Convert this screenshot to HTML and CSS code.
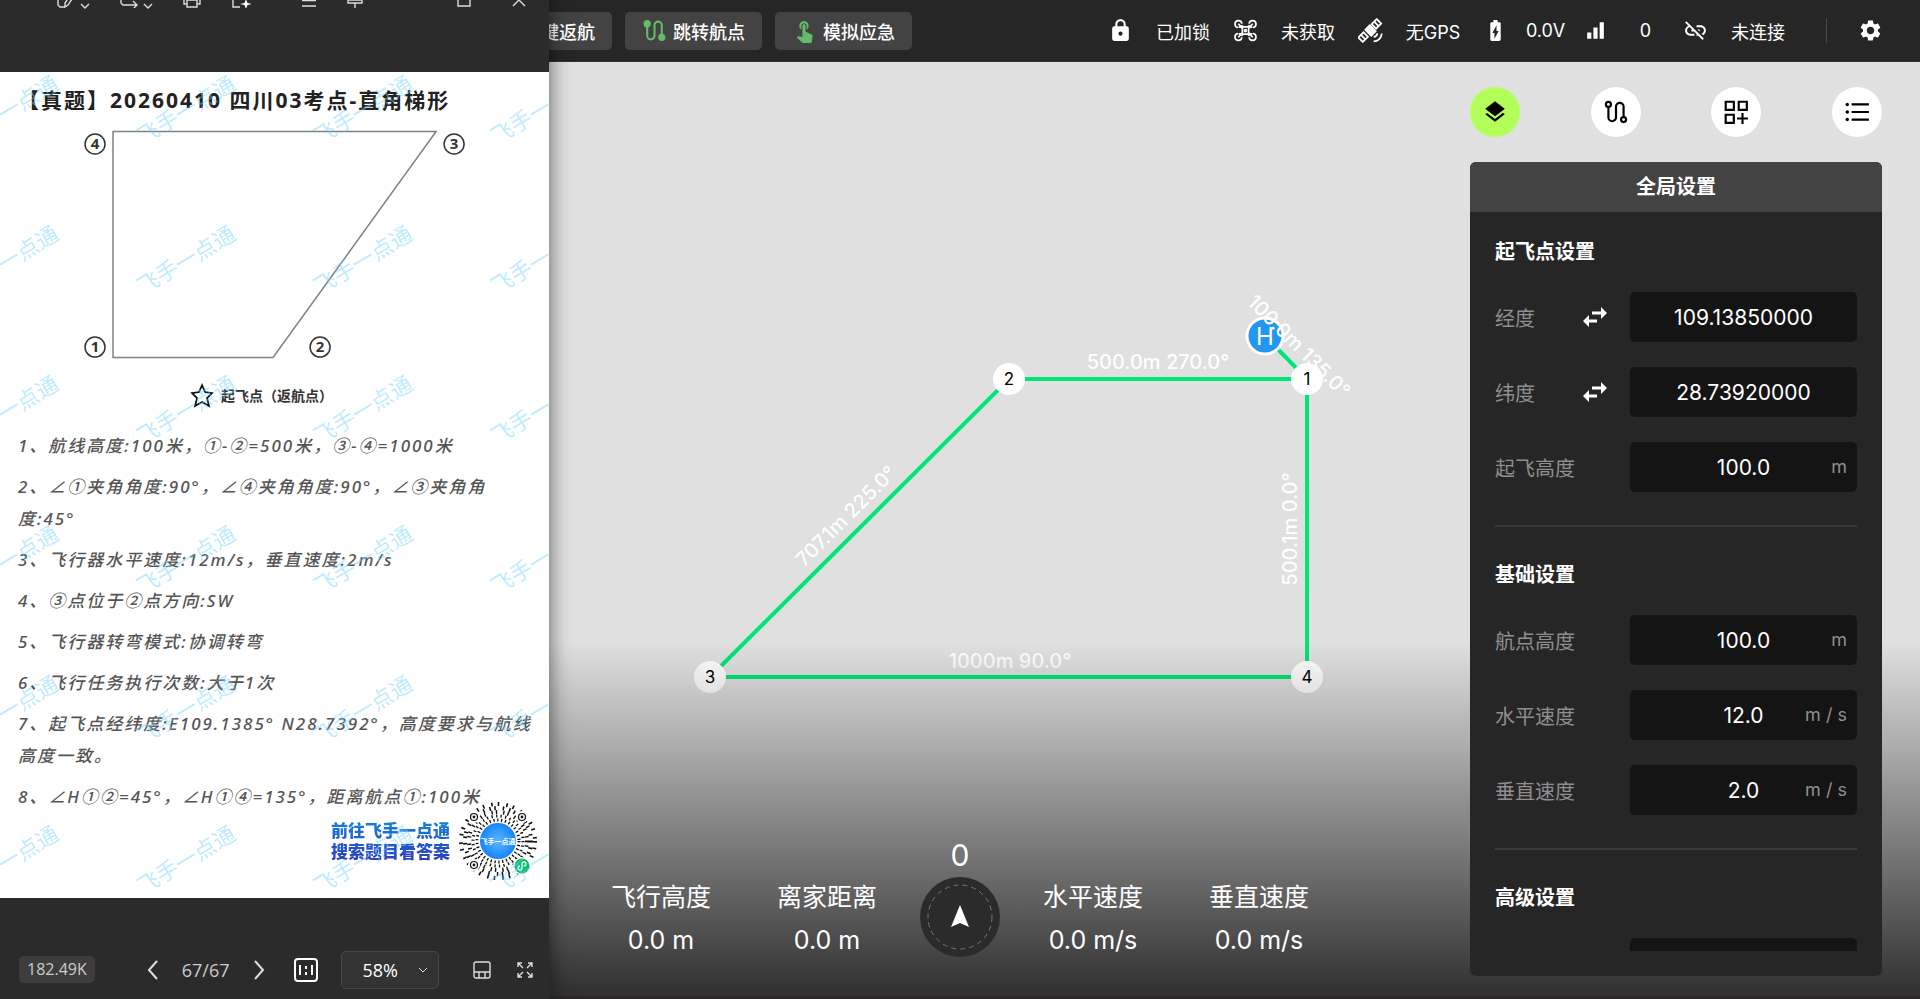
FILE: index.html
```html
<!DOCTYPE html>
<html lang="zh-CN">
<head>
  <meta charset="UTF-8">
  <meta name="viewport" content="width=device-width, initial-scale=1.0">
  <title>航线规划</title>
  <link rel="stylesheet" href="styles.css">
</head>
<body>
  <div class="app">
    <header class="topbar">
      <div class="actions">
        <button class="action">
          <svg class="icon" viewBox="0 0 24 24" fill="currentColor"><path d="M10 20v-6h4v6h5v-8h3L12 3 2 12h3v8z"/></svg>
          一键返航
        </button>
        <button class="action">
          <svg class="icon" viewBox="0 0 24 24" fill="none" stroke="currentColor" stroke-width="2"><path d="M5 6v11a3.500 3.500 0 0 0 7 0V7a3.500 3.500 0 0 1 7 0v11"/><circle cx="5" cy="5.500" r="2.500" fill="currentColor"/><circle cx="19" cy="18.500" r="2.500" fill="currentColor"/></svg>
          跳转航点
        </button>
        <button class="action">
          <svg class="icon" viewBox="0 0 24 24" fill="currentColor"><path d="M9 11.240V7.500C9 6.120 10.120 5 11.500 5S14 6.120 14 7.500v3.740c1.210-.81 2-2.180 2-3.740C16 5.010 13.990 3 11.500 3S7 5.010 7 7.500c0 1.560.79 2.930 2 3.740zm9.840 4.630l-4.540-2.260c-.17-.07-.35-.11-.54-.11H13v-6c0-.83-.67-1.500-1.500-1.500S10 6.670 10 7.500v10.740l-3.430-.72c-.08-.01-.15-.03-.24-.03-.31 0-.59.13-.79.33l-.79.8 4.940 4.940c.27.27.65.44 1.060.44h6.790c.75 0 1.330-.55 1.440-1.280l.75-5.270c.01-.07.02-.14.02-.2 0-.62-.38-1.160-.91-1.380z"/></svg>
          模拟应急
        </button>
      </div>

      <div class="status">
        <svg class="icon" viewBox="0 0 24 24" fill="currentColor"><path d="M12 17a2 2 0 0 0 2-2 2 2 0 0 0-2-2 2 2 0 0 0-2 2 2 2 0 0 0 2 2m6-9a2 2 0 0 1 2 2v10a2 2 0 0 1-2 2H6a2 2 0 0 1-2-2V10a2 2 0 0 1 2-2h1V6a5 5 0 0 1 10 0v2h1m-6-5a3 3 0 0 0-3 3v2h6V6a3 3 0 0 0-3-3z"/></svg>
        <span class="state">已加锁</span>
        <svg class="icon" viewBox="0 0 24 24" fill="none" stroke="currentColor" stroke-width="1.600"><path d="M8.500 5.500a3.300 3.300 0 1 0-3.500 3.600M15.500 5.500a3.300 3.300 0 1 1 3.500 3.600M8.500 18.500A3.300 3.300 0 1 1 5 14.900M15.500 18.500a3.300 3.300 0 1 0 3.500-3.600"/><path d="M5 5.500l4 4M19 5.500l-4 4M5 18.500l4-4M19 18.500l-4-4M8 7l2 1.500h4L16 7M8 17l2-1.500h4l2 1.500M5.500 8.800h2l1.500 1v4.400l-1.500 1h-2M18.500 8.800h-2l-1.500 1v4.400l1.500 1h2"/><circle cx="12" cy="12" r="1"/></svg>
        <span class="state">未获取</span>
        <svg class="icon" viewBox="0 0 24 24" fill="none" stroke="currentColor" stroke-width="1.700"><g transform="rotate(-45 12 12)"><path fill="currentColor" d="M9 8h6v8H9z"/><path d="M-1 8.500h7v6h-7zM17 8.500h7v6h-7zM2.500 8.500v6M20.500 8.500v6"/></g><path d="M15 18.200a4 4 0 0 0 3.600-3.400M15 22.500a8 8 0 0 0 7.800-7.700"/></svg>
        <span class="state">无GPS</span>
        <svg class="icon" viewBox="0 0 24 24" fill="currentColor"><path d="M15.670 4H14V2h-4v2H8.330C7.600 4 7 4.600 7 5.330v15.330C7 21.400 7.600 22 8.330 22h7.330c.74 0 1.340-.6 1.340-1.330V5.330C17 4.600 16.400 4 15.670 4zM11 20v-5.500H9L13 7v5.500h2L11 20z"/></svg>
        <span class="state short">0.0V</span>
        <svg class="icon" viewBox="0 0 24 24" fill="currentColor"><path d="M4 14h4v6H4zM10 9h4v11h-4zM16 4h4v16h-4z"/></svg>
        <span class="state short">0</span>
        <svg class="icon" viewBox="0 0 24 24" fill="currentColor"><path d="M17 7h-4v1.900h4c1.710 0 3.100 1.390 3.100 3.100 0 1.430-.98 2.630-2.310 2.980l1.460 1.460C20.880 15.610 22 13.950 22 12c0-2.760-2.240-5-5-5zm-1 4h-2.190l2 2H16zM2 4.270l3.110 3.110C3.290 8.120 2 9.910 2 12c0 2.760 2.240 5 5 5h4v-1.900H7c-1.710 0-3.100-1.390-3.100-3.100 0-1.590 1.210-2.900 2.760-3.070L8.730 11H8v2h2.730L13 15.270V17h1.730l4.010 4L20 19.740 3.270 3 2 4.270z"/></svg>
        <span class="state">未连接</span>
        <span class="bar"></span>
        <button class="gear" aria-label="设置">
          <svg class="icon" viewBox="0 0 24 24" fill="currentColor"><path d="M19.140 12.940c.04-.3.06-.61.06-.94 0-.32-.02-.64-.07-.94l2.030-1.580c.18-.14.23-.41.12-.61l-1.920-3.320c-.12-.22-.37-.29-.59-.22l-2.390.96c-.5-.38-1.030-.7-1.620-.94l-.36-2.540c-.04-.24-.24-.41-.48-.41h-3.840c-.24 0-.43.17-.47.41l-.36 2.540c-.59.24-1.130.57-1.620.94l-2.390-.96c-.22-.08-.47 0-.59.22L2.740 8.870c-.12.21-.08.47.12.61l2.030 1.580c-.05.3-.09.63-.09.94s.02.64.07.94l-2.030 1.580c-.18.14-.23.41-.12.61l1.920 3.320c.12.22.37.29.59.22l2.390-.96c.5.38 1.030.7 1.620.94l.36 2.540c.05.24.24.41.48.41h3.840c.24 0 .44-.17.47-.41l.36-2.540c.59-.24 1.130-.56 1.620-.94l2.390.96c.22.08.47 0 .59-.22l1.920-3.320c.12-.22.07-.47-.12-.61l-2.010-1.580zM12 15.600c-1.980 0-3.600-1.620-3.600-3.600s1.620-3.600 3.600-3.600 3.600 1.620 3.600 3.600-1.620 3.600-3.600 3.600z"/></svg>
        </button>
      </div>
    </header>

    <main class="map">
      <svg class="route">
        <path class="leg" d="M1265 274L1307 317M1307 317H1009L710 615H1307V317"/>
        <circle class="home" cx="1265" cy="274" r="18"/>
        <text class="home-text" x="1265" y="283">H</text>
        <g class="leg-text">
          <text x="1158" y="307">500.0m 270.0°</text>
          <text transform="translate(851 459) rotate(-45)">707.1m 225.0°</text>
          <text x="1010" y="606">1000m 90.0°</text>
          <text transform="translate(1297 467) rotate(-90)">500.1m 0.0°</text>
          <text transform="translate(1294 289) rotate(45)">100.0m 135.0°</text>
        </g>
        <g class="point">
          <circle cx="1307" cy="317" r="16"/><text x="1307" y="323">1</text>
          <circle cx="1009" cy="317" r="16"/><text x="1009" y="323">2</text>
          <circle cx="710" cy="615" r="16"/><text x="710" y="621">3</text>
          <circle cx="1307" cy="615" r="16"/><text x="1307" y="621">4</text>
        </g>
      </svg>

      <section class="hud">
        <div class="gauge"><span>飞行高度</span><span>0.0 m</span></div>
        <div class="gauge"><span>离家距离</span><span>0.0 m</span></div>
        <div class="compass">
          <span class="heading">0</span>
          <svg viewBox="0 0 80 80"><circle cx="40" cy="40" r="40" fill="#2b2b2b"/><circle cx="40" cy="40" r="32" fill="none" stroke="#777" stroke-dasharray="5 4"/><path d="M40 28l9 22-9-4-9 4z" fill="#fff"/></svg>
        </div>
        <div class="gauge"><span>水平速度</span><span>0.0 m/s</span></div>
        <div class="gauge"><span>垂直速度</span><span>0.0 m/s</span></div>
      </section>

      <aside class="side">
        <nav class="tabs">
          <button class="tab active" aria-label="全局设置"><svg viewBox="0 0 24 24"><path d="M11.990 18.540l-7.370-5.730L3 14.070l9 7 9-7-1.630-1.270-7.380 5.740zM12 16l7.360-5.730L21 9l-9-7-9 7 1.630 1.270L12 16z"/></svg></button>
          <button class="tab" aria-label="航线"><svg viewBox="0 0 24 24" fill="none" stroke="#000" stroke-width="2"><path d="M5 7v10a3.500 3.500 0 0 0 7 0V7a3.500 3.500 0 0 1 7 0v10"/><circle cx="5" cy="5" r="2.300" fill="#fff"/><circle cx="19" cy="19" r="2.300" fill="#fff"/></svg></button>
          <button class="tab" aria-label="添加组件"><svg viewBox="0 0 24 24" fill="none" stroke="#000" stroke-width="2"><path d="M2.500 2.500h7.500v7.500H2.500zM14.500 2.500H22v7.500h-7.500zM2.500 14.500h7.500V22H2.500zM18 13v10M13 18h10"/></svg></button>
          <button class="tab" aria-label="列表"><svg viewBox="0 0 24 24"><path d="M7 4h16v2H7zM7 11h16v2H7zM7 18h16v2H7z"/><circle cx="3" cy="5" r="1.600"/><circle cx="3" cy="12" r="1.600"/><circle cx="3" cy="19" r="1.600"/></svg></button>
        </nav>

        <form class="panel">
          <h2 class="panel-title">全局设置</h2>
          <div class="panel-body">
            <section class="group">
              <h3>起飞点设置</h3>
              <div class="row">
                <label for="lng">经度</label>
                <button type="button" class="swap" aria-label="切换经度格式"><svg viewBox="0 0 26 26" fill="currentColor"><path d="M1 17l6-6v4.500h8v3H7V23zM25 9l-6-6v4.500h-9v3h9V15z"/></svg></button>
                <div class="field"><input id="lng" type="text" value="109.13850000"></div>
              </div>
              <div class="row">
                <label for="lat">纬度</label>
                <button type="button" class="swap" aria-label="切换纬度格式"><svg viewBox="0 0 26 26" fill="currentColor"><path d="M1 17l6-6v4.500h8v3H7V23zM25 9l-6-6v4.500h-9v3h9V15z"/></svg></button>
                <div class="field"><input id="lat" type="text" value="28.73920000"></div>
              </div>
              <div class="row">
                <label for="home-alt">起飞高度</label>
                <div class="field"><input id="home-alt" type="text" value="100.0"><span class="unit">m</span></div>
              </div>
            </section>
            <section class="group">
              <h3>基础设置</h3>
              <div class="row">
                <label for="alt">航点高度</label>
                <div class="field"><input id="alt" type="text" value="100.0"><span class="unit">m</span></div>
              </div>
              <div class="row">
                <label for="hspeed">水平速度</label>
                <div class="field"><input id="hspeed" type="text" value="12.0"><span class="unit">m / s</span></div>
              </div>
              <div class="row">
                <label for="vspeed">垂直速度</label>
                <div class="field"><input id="vspeed" type="text" value="2.0"><span class="unit">m / s</span></div>
              </div>
            </section>
            <section class="group">
              <h3>高级设置</h3>
              <div class="row">
                <div class="field"><input type="text" aria-label="高级设置"></div>
              </div>
            </section>
          </div>
        </form>
      </aside>
    </main>
  </div>

  <!-- 图片查看器窗口 -->
  <div class="viewer">
    <header class="viewer-top">
      <div class="tools">
        <button aria-label="编辑"><svg viewBox="0 0 20 20"><path d="M10 3H2v14l2 2h5M18 8l-6 9-3 2v-4l6-9z"/></svg><svg class="caret" viewBox="0 0 10 10"><path d="M1 11l4 4 4-4"/></svg></button>
        <button aria-label="旋转"><svg viewBox="0 0 20 20"><path d="M17 4H2v11l2 2h14M14 13l4 4-4 4"/></svg><svg class="caret" viewBox="0 0 10 10"><path d="M1 11l4 4 4-4"/></svg></button>
        <button aria-label="打印"><svg viewBox="0 0 20 20"><path d="M5 16H2V6h16v10h-3M5 12h10v7H5z"/></svg></button>
        <button aria-label="智能裁剪"><svg viewBox="0 0 20 20"><path d="M9 19H2V3h12"/><path fill="#fff" stroke="none" d="M15 11l1.500 4 4.500 1-4.500 1-1.500 4-1.500-4-4.500-1 4.500-1z"/></svg></button>
      </div>
      <div class="tools menu">
        <button aria-label="菜单"><svg viewBox="0 0 20 20"><path d="M3 7h14M3 12.500h14M3 18h14"/></svg></button>
        <button aria-label="置顶"><svg viewBox="0 0 20 20"><path d="M5 2h10M6 2v9M14 2v9M3 15v-3h14v3zM10 15v6"/></svg></button>
      </div>
      <div class="tools window-buttons">
        <button aria-label="最大化"><svg viewBox="0 0 20 20"><path d="M4 7h12v11H4z"/></svg></button>
        <button aria-label="关闭"><svg viewBox="0 0 20 20"><path d="M4 6l12 12M16 6L4 18"/></svg></button>
      </div>
    </header>

    <article class="page">
      <h1>【真题】20260410 四川03考点-直角梯形</h1>
      <svg class="diagram" viewBox="0 0 549 302">
        <path d="M113 12.500H436L273 238.500H113z" fill="none" stroke="#808080" stroke-width="1.500"/>
        <g class="mark">
          <circle cx="95" cy="25" r="10"/><text x="95" y="30">4</text>
          <circle cx="454" cy="25" r="10"/><text x="454" y="30">3</text>
          <circle cx="95" cy="228" r="10"/><text x="95" y="233">1</text>
          <circle cx="320" cy="228" r="10"/><text x="320" y="233">2</text>
        </g>
        <path d="M202 266l3 7 7 1-5 5 2 8-7-4-7 4 2-8-5-5 7-1z" fill="none" stroke="#111" stroke-width="1.700"/>
        <text class="start" x="221" y="282">起飞点（返航点）</text>
      </svg>
      <ol class="task">
        <li>1、航线高度:100米，①-②=500米，③-④=1000米</li>
        <li>2、∠①夹角角度:90°，∠④夹角角度:90°，∠③夹角角<br>度:45°</li>
        <li>3、飞行器水平速度:12m/s，垂直速度:2m/s</li>
        <li>4、③点位于②点方向:SW</li>
        <li>5、飞行器转弯模式:协调转弯</li>
        <li>6、飞行任务执行次数:大于1次</li>
        <li>7、起飞点经纬度:E109.1385° N28.7392°，高度要求与航线<br>高度一致。</li>
        <li>8、∠H①②=45°，∠H①④=135°，距离航点①:100米</li>
      </ol>
      <div class="promo">
        <p>前往飞手一点通<br>搜索题目看答案</p>
        <svg class="code" viewBox="0 0 80 80">
          <defs><radialGradient id="ball"><stop offset="0" stop-color="#5db8ff"/><stop offset="1" stop-color="#1584fb"/></radialGradient></defs>
          <g fill="none" stroke="#111">
            <circle cx="40" cy="40" r="21" stroke-width="3" stroke-dasharray="1.300 2.600"/>
            <circle cx="40" cy="40" r="25" stroke-width="3" stroke-dasharray="1.300 3.300"/>
            <circle cx="40" cy="40" r="29" stroke-width="4" stroke-dasharray="1.400 3 1.400 6"/>
            <circle cx="40" cy="40" r="33" stroke-width="4" stroke-dasharray="1.500 5 1.500 3.500 1.500 7"/>
            <circle cx="40" cy="40" r="37" stroke-width="4" stroke-dasharray="1.600 5 1.600 7"/>
          </g>
          <g fill="#fff" stroke="#111" stroke-width="1.200">
            <circle cx="16" cy="16" r="6" stroke="none"/><circle cx="64" cy="16" r="6" stroke="none"/><circle cx="16" cy="64" r="6" stroke="none"/>
            <circle cx="16" cy="16" r="3.500"/><circle cx="64" cy="16" r="3.500"/><circle cx="16" cy="64" r="3.500"/>
            <circle cx="16" cy="16" r=".8"/><circle cx="64" cy="16" r=".8"/><circle cx="16" cy="64" r=".8"/>
          </g>
          <circle cx="40" cy="40" r="18" fill="url(#ball)"/>
          <text x="40" y="43">飞手一点通</text>
          <circle cx="64" cy="65" r="9" fill="#fff"/>
          <circle cx="64" cy="65" r="7.500" fill="#07c160"/>
          <path d="M62 65a2 2 0 1 0 2 2v-4a2 2 0 1 1 2 2" fill="none" stroke="#fff" stroke-width="1.300"/>
        </svg>
      </div>
      <svg class="watermark">
        <defs>
          <pattern id="wm" x="-79" y="-40" width="177" height="150" patternUnits="userSpaceOnUse">
            <text x="88" y="86" transform="rotate(-31 88 78)">飞手一点通</text>
          </pattern>
        </defs>
        <rect width="100%" height="100%" fill="url(#wm)"/>
      </svg>
    </article>

    <footer class="viewer-bottom">
      <span class="size">182.49K</span>
      <div class="pager">
        <button aria-label="上一张"><svg viewBox="0 0 12 22"><path d="M10 2L2 11l8 9"/></svg></button>
        <span>67/67</span>
        <button aria-label="下一张"><svg viewBox="0 0 12 22"><path d="M2 2l8 9-8 9"/></svg></button>
      </div>
      <button class="actual" aria-label="原始大小"><svg viewBox="0 0 24 24"><rect x="1" y="1" width="22" height="22" rx="3"/><path d="M6 7v10M18 7v10M12 8v3M12 14v3"/></svg></button>
      <div class="zoom">
        <select aria-label="缩放"><option>58%</option></select>
        <svg viewBox="0 0 10 10"><path d="M1 3l4 4 4-4"/></svg>
      </div>
      <button class="layout" aria-label="缩略图"><svg viewBox="0 0 18 18"><rect x="1" y="1" width="16" height="16" rx="2"/><path d="M1 11h16M6 11v6M12 11v6"/></svg></button>
      <button class="full" aria-label="全屏"><svg viewBox="0 0 18 18"><path d="M2 6V2h4M2 2l5 5M12 2h4v4M16 2l-5 5M2 12v4h4M2 16l5-5M16 12v4h-4M16 16l-5-5"/></svg></button>
    </footer>
  </div>
</body>
</html>
```
FILE: styles.css
```css
* {
  box-sizing: border-box;
}

body {
  margin: 0;
  height: 100vh;
  overflow: hidden;
  font-family: Inter, "Noto Sans CJK SC", sans-serif;
  color: #fff;
}

button {
  display: flex;
  align-items: center;
  justify-content: center;
  padding: 0;
  border: none;
  background: none;
  color: inherit;
  font: inherit;
  cursor: pointer;
}

h1, h2, h3, p, ol {
  margin: 0;
  padding: 0;
}

.app {
  display: flex;
  flex-direction: column;
  height: 100%;
}

/* 顶部栏 */
.topbar {
  display: flex;
  align-items: center;
  justify-content: space-between;
  height: 62px;
  padding: 0 37px 0 475px;
  background: #262626;
  border-bottom: 1px solid #322d30;
}

.actions {
  display: flex;
  gap: 13px;
}

.action {
  gap: 6px;
  height: 38px;
  padding: 0 17px;
  border-radius: 5px;
  background: #434343;
  font-size: 18px;
  font-weight: 500;
  white-space: nowrap;
}

.action .icon {
  color: #66bb6a;
}

.icon {
  flex: none;
  width: 25px;
  height: 25px;
}

.status {
  display: flex;
  align-items: center;
  font-size: 18px;
}

.state {
  width: 100px;
  text-align: center;
}

.short {
  width: 75px;
}

.bar {
  width: 1px;
  height: 25px;
  margin: 0 31px 0 18px;
  background: #4a4a4a;
}

/* 地图 */
.map {
  position: relative;
  flex: 1;
  display: flex;
  justify-content: flex-end;
  min-height: 0;
  padding: 25px 38px 20px;
  border-bottom: 3px solid #2c2829;
  background: #e0e0e0;
}

.route {
  position: absolute;
  left: 0;
  top: 0;
  width: 100%;
  height: 100%;
  text-anchor: middle;
}

.leg {
  fill: none;
  stroke: #00e676;
  stroke-width: 4;
}

.home {
  fill: #2196f3;
  stroke: #fff;
  stroke-width: 3;
}

.home-text {
  fill: #fff;
  font-size: 24px;
}

.leg-text {
  fill: #fff;
  font-size: 20px;
  font-weight: 500;
}

.point {
  fill: #fff;
  font-size: 17px;
}

.point text {
  fill: #000;
}

/* 底部渐变和飞行数据 */
.hud {
  position: absolute;
  inset: 0;
  display: flex;
  justify-content: center;
  align-items: flex-end;
  padding-bottom: 39px;
  background: linear-gradient(transparent 62%, rgba(0, 0, 0, 0.79) 100%);
  font-size: 25px;
  line-height: 43px;
}

.gauge {
  display: flex;
  flex-direction: column;
  align-items: center;
  width: 100px;
  margin: 0 33px;
  margin-bottom: -5px;
  white-space: nowrap;
}

.compass {
  display: flex;
  flex-direction: column;
  align-items: center;
  width: 80px;
  margin: 0 10px;
}

.compass svg {
  width: 80px;
  height: 80px;
}

.heading {
  font-size: 30px;
}

/* 右侧设置 */
.side {
  position: relative;
  display: flex;
  flex-direction: column;
  gap: 25px;
  width: 412px;
}

.tabs {
  display: flex;
  justify-content: space-between;
}

.tab {
  width: 50px;
  height: 50px;
  border-radius: 50%;
  background: #fff;
}

.tab.active {
  background: #b2ff59;
}

.tab svg {
  width: 26px;
  height: 26px;
}

.panel {
  flex: 1;
  display: flex;
  flex-direction: column;
  min-height: 0;
  padding-bottom: 25px;
  border-radius: 6px;
  overflow: hidden;
  background: #262626;
  font-size: 20px;
}

.panel-title {
  background: #434343;
  font-size: 20px;
  line-height: 50px;
  text-align: center;
}

.panel-body {
  flex: 1;
  overflow: hidden;
  padding: 25px 25px 0;
}

.group {
  display: flex;
  flex-direction: column;
  gap: 25px;
}

.group + .group {
  margin-top: 33px;
  padding-top: 33px;
  border-top: 2px solid #3a3a3a;
}

.group h3 {
  font-size: 20px;
  line-height: 30px;
}

.row {
  display: flex;
  align-items: center;
}

.row label {
  color: #8f8f8f;
}

.swap {
  margin-left: auto;
  margin-right: 22px;
}

.swap svg {
  width: 26px;
  height: 26px;
}

.field {
  position: relative;
  width: 227px;
  margin-left: auto;
}

.swap + .field {
  margin-left: 0;
}

.field input {
  display: block;
  width: 100%;
  height: 50px;
  border: none;
  border-radius: 5px;
  background: #141414;
  color: #fff;
  font: inherit;
  font-size: 21px;
  text-align: center;
}

.unit {
  position: absolute;
  right: 10px;
  top: 0;
  color: #8f8f8f;
  font-size: 18px;
  line-height: 50px;
}

/* 图片查看器 */
.viewer {
  position: absolute;
  left: 0;
  top: 0;
  display: flex;
  flex-direction: column;
  width: 28.6%;
  height: 100%;
  overflow: hidden;
  background: #2b2b2b;
  box-shadow: 0 0 20px rgba(0, 0, 0, 0.6);
  font-family: "Noto Sans", "Noto Sans CJK SC", sans-serif;
}

.viewer svg {
  fill: none;
  stroke: #ddd;
}

.viewer-top {
  display: flex;
  align-items: flex-start;
  height: 72px;
  padding-left: 56px;
}

.tools {
  display: flex;
  gap: 29px;
  margin-top: -12px;
}

.tools button {
  gap: 4px;
}

.tools svg {
  width: 20px;
  height: 20px;
  stroke-width: 1.4;
}

.tools .caret {
  width: 10px;
  height: 10px;
  overflow: visible;
}

.menu {
  gap: 26px;
  margin-left: 48px;
}

.window-buttons {
  gap: 35px;
  margin-left: 89px;
}

.page {
  position: relative;
  height: 826px;
  overflow: hidden;
  background: #fff;
  color: #555;
}

.page h1 {
  height: 47px;
  padding: 5px 0 0 18px;
  color: #222;
  font-size: 21px;
  letter-spacing: 2px;
  line-height: 47px;
  white-space: nowrap;
}

.page .diagram {
  display: block;
  width: 100%;
  stroke: none;
}

.mark circle {
  stroke: #333;
  stroke-width: 1.5;
}

.mark text {
  fill: #333;
  stroke: none;
  font-size: 15px;
  font-weight: bold;
  text-anchor: middle;
}

.start {
  fill: #333;
  font-size: 14px;
  font-weight: bold;
}

.task {
  display: flex;
  flex-direction: column;
  gap: 9px;
  padding: 9px 18px 0;
  list-style: none;
  font-size: 17px;
  font-style: italic;
  font-weight: 500;
  letter-spacing: 2px;
  line-height: 32px;
  white-space: nowrap;
}

.promo {
  position: absolute;
  right: 11px;
  bottom: 17px;
  display: flex;
  align-items: center;
  gap: 8px;
}

.promo p {
  background: linear-gradient(#1583d8, #2c3bbd);
  background-clip: text;
  color: transparent;
  font-size: 17px;
  font-weight: 900;
  line-height: 21px;
}

.promo .code {
  width: 80px;
  height: 80px;
  stroke: none;
}

.code text {
  fill: #fff;
  font-size: 7px;
  font-weight: bold;
  text-anchor: middle;
}

.page .watermark {
  position: absolute;
  left: 0;
  top: 0;
  width: 100%;
  height: 100%;
  stroke: none;
  pointer-events: none;
}

.watermark text {
  fill: rgba(110, 210, 255, 0.45);
  font-size: 22px;
  text-anchor: middle;
}

.viewer-bottom {
  flex: 1;
  display: flex;
  align-items: center;
  padding: 42px 0 0 19px;
  color: #ccc;
  font-family: "Open Sans", sans-serif;
}

.size {
  padding: 0 8px;
  border-radius: 5px;
  background: #3d3d3d;
  font-size: 16px;
  line-height: 27px;
}

.pager {
  display: flex;
  align-items: center;
  gap: 23px;
  margin-left: 52px;
  font-size: 18px;
}

.pager svg {
  width: 12px;
  height: 22px;
  stroke-width: 2;
}

.actual {
  margin: 0 23px 0 29px;
}

.actual svg {
  width: 24px;
  height: 24px;
  stroke: #fff;
  stroke-width: 2;
}

.zoom {
  position: relative;
  width: 98px;
}

.zoom select {
  appearance: none;
  width: 100%;
  height: 38px;
  padding: 0 21px;
  border: 1px solid #484848;
  border-radius: 5px;
  background: #333;
  color: #fff;
  font: 18px "Open Sans", sans-serif;
}

.zoom svg {
  position: absolute;
  right: 11px;
  top: 14px;
  width: 10px;
  height: 10px;
  pointer-events: none;
}

.layout {
  margin: 0 25px 0 34px;
}

.layout svg,
.full svg {
  width: 18px;
  height: 18px;
  stroke-width: 1.4;
}
```
